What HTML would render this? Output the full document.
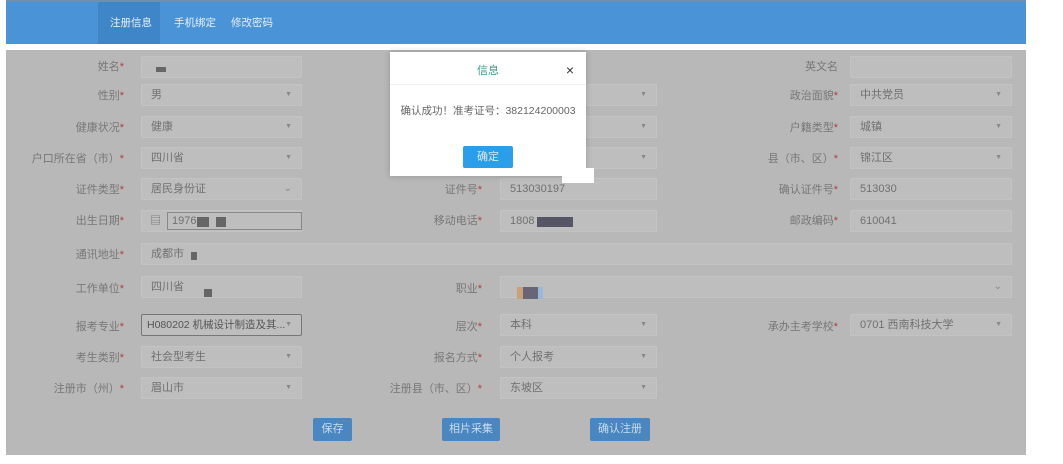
<!DOCTYPE html>
<html><head><meta charset="utf-8"><style>
*{box-sizing:border-box;margin:0;padding:0}
body{width:1063px;height:464px;background:#fff;font-family:"Liberation Sans","Noto Sans CJK SC",sans-serif;font-size:11px;color:#6e6e6e;position:relative;overflow:hidden}
.hdr{position:absolute;left:6px;top:0;width:1020px;height:44px;background:#4a93d6;border-top:2px solid #6a8fb0}
.tab{position:absolute;top:0;height:42px;line-height:42px;color:#e8f0f8;font-size:10.5px}
.grey{position:absolute;left:6px;top:50px;width:1020px;height:405px;background:#b8b8b8}
.l{position:absolute;text-align:right;width:120px;color:#777;margin-top:-2px}
.l i{color:#b04040;font-style:normal}
.f{position:absolute;height:22px;background:#bebebe;border:1px solid #c3c3c3;padding-left:9px;line-height:20px;color:#707070}
.f .a{position:absolute;right:9px;top:0;font-size:7px;color:#888}
.btn{position:absolute;top:418px;height:23px;background:#4a86bf;color:#c8dcee;line-height:23px;text-align:center;border-radius:2px}
.dlg{position:absolute;left:390px;top:52px;width:196px;height:124px;background:#fff;box-shadow:0 0 6px rgba(0,0,0,.2)}
.blk{position:absolute;background:#666;}
</style></head><body>
<div class="hdr">
<div style="position:absolute;left:92px;top:0;width:62px;height:42px;background:#3f86c8"></div>
<div class="tab" style="left:104px">注册信息</div>
<div class="tab" style="left:168px">手机绑定</div>
<div class="tab" style="left:225px">修改密码</div>
</div>
<div class="grey"></div>

<!-- col1 -->
<div class="l" style="left:4px;top:60px">姓名<i>*</i></div>
<div class="f" style="left:141px;top:56px;width:161px"><span class="blk" style="left:14px;top:10px;width:10px;height:5px"></span></div>
<div class="l" style="left:4px;top:89px">性别<i>*</i></div>
<div class="f" style="left:141px;top:84px;width:161px">男<span class="a">▼</span></div>
<div class="l" style="left:4px;top:121px">健康状况<i>*</i></div>
<div class="f" style="left:141px;top:116px;width:161px">健康<span class="a">▼</span></div>
<div class="l" style="left:4px;top:152px">户口所在省（市）<i>*</i></div>
<div class="f" style="left:141px;top:147px;width:161px">四川省<span class="a">▼</span></div>
<div class="l" style="left:4px;top:183px">证件类型<i>*</i></div>
<div class="f" style="left:141px;top:178px;width:161px">居民身份证<span class="a" style="font-size:10px">⌄</span></div>
<div class="l" style="left:4px;top:214px">出生日期<i>*</i></div>
<div class="f" style="left:141px;top:210px;width:161px;padding-left:8px">▤<span style="position:absolute;left:25px;top:1px;width:135px;height:18px;border:1px solid #888;padding-left:4px;line-height:16px">1976</span><span class="blk" style="left:55px;top:6px;width:12px;height:10px"></span><span class="blk" style="left:74px;top:6px;width:10px;height:10px"></span></div>
<div class="l" style="left:4px;top:248px">通讯地址<i>*</i></div>
<div class="f" style="left:141px;top:243px;width:871px">成都市<span class="blk" style="left:49px;top:8px;width:6px;height:8px"></span></div>
<div class="l" style="left:4px;top:282px">工作单位<i>*</i></div>
<div class="f" style="left:141px;top:276px;width:161px">四川省<span class="blk" style="left:62px;top:12px;width:8px;height:8px"></span></div>
<div class="l" style="left:4px;top:320px">报考专业<i>*</i></div>
<div class="f" style="left:141px;top:314px;width:161px;border-color:#777;border-radius:2px;padding-left:5px;color:#555;font-size:10.5px">H080202 机械设计制造及其...<span class="a">▼</span></div>
<div class="l" style="left:4px;top:351px">考生类别<i>*</i></div>
<div class="f" style="left:141px;top:346px;width:161px">社会型考生<span class="a">▼</span></div>
<div class="l" style="left:4px;top:382px">注册市（州）<i>*</i></div>
<div class="f" style="left:141px;top:377px;width:161px">眉山市<span class="a">▼</span></div>

<!-- col2 -->
<div class="f" style="left:500px;top:84px;width:157px"><span class="a">▼</span></div>
<div class="f" style="left:500px;top:116px;width:157px"><span class="a">▼</span></div>
<div class="f" style="left:500px;top:147px;width:157px"><span class="a">▼</span></div>
<div class="l" style="left:362px;top:183px">证件号<i>*</i></div>
<div class="f" style="left:500px;top:178px;width:157px">513030197</div>
<div class="l" style="left:362px;top:214px">移动电话<i>*</i></div>
<div class="f" style="left:500px;top:210px;width:157px">1808<span class="blk" style="left:36px;top:6px;width:36px;height:10px;background:#556"></span></div>
<div class="l" style="left:362px;top:282px">职业<i>*</i></div>
<div class="f" style="left:500px;top:276px;width:512px"><span class="blk" style="left:16px;top:10px;width:26px;height:12px;background:#667;border-left:6px solid #c9a07a;border-right:5px solid #9bb8d8"></span><span class="a" style="font-size:10px">⌄</span></div>
<div class="l" style="left:362px;top:320px">层次<i>*</i></div>
<div class="f" style="left:500px;top:314px;width:157px">本科<span class="a">▼</span></div>
<div class="l" style="left:362px;top:351px">报名方式<i>*</i></div>
<div class="f" style="left:500px;top:346px;width:157px">个人报考<span class="a">▼</span></div>
<div class="l" style="left:362px;top:382px">注册县（市、区）<i>*</i></div>
<div class="f" style="left:500px;top:377px;width:157px">东坡区<span class="a">▼</span></div>

<!-- col3 -->
<div class="l" style="left:718px;top:60px">英文名</div>
<div class="f" style="left:850px;top:56px;width:162px"></div>
<div class="l" style="left:718px;top:89px">政治面貌<i>*</i></div>
<div class="f" style="left:850px;top:84px;width:162px">中共党员<span class="a">▼</span></div>
<div class="l" style="left:718px;top:121px">户籍类型<i>*</i></div>
<div class="f" style="left:850px;top:116px;width:162px">城镇<span class="a">▼</span></div>
<div class="l" style="left:718px;top:152px">县（市、区）<i>*</i></div>
<div class="f" style="left:850px;top:147px;width:162px">锦江区<span class="a">▼</span></div>
<div class="l" style="left:718px;top:183px">确认证件号<i>*</i></div>
<div class="f" style="left:850px;top:178px;width:162px">513030</div>
<div class="l" style="left:718px;top:214px">邮政编码<i>*</i></div>
<div class="f" style="left:850px;top:210px;width:162px">610041</div>
<div class="l" style="left:718px;top:320px">承办主考学校<i>*</i></div>
<div class="f" style="left:850px;top:314px;width:162px">0701 西南科技大学<span class="a">▼</span></div>

<div class="btn" style="left:313px;width:39px">保存</div>
<div class="btn" style="left:442px;width:58px">相片采集</div>
<div class="btn" style="left:590px;width:60px">确认注册</div>

<div class="dlg">
<div style="position:absolute;left:0;top:10px;width:100%;text-align:center;color:#3a9a8a;font-size:11px">信息</div>
<div style="position:absolute;right:12px;top:10px;font-size:14px;color:#333">×</div>
<div style="position:absolute;left:0;top:32px;width:100%;height:1px;background:#eee"></div>
<div style="position:absolute;left:0;top:51px;width:100%;text-align:center;color:#666;font-size:10.5px">确认成功！准考证号：382124200003</div>
<div style="position:absolute;left:73px;top:94px;width:50px;height:22px;background:#2a9ee8;color:#d8ecfa;text-align:center;line-height:22px;border-radius:2px">确定</div>
</div>
<div style="position:absolute;left:562px;top:168px;width:32px;height:15px;background:#fff"></div>
</body></html>
